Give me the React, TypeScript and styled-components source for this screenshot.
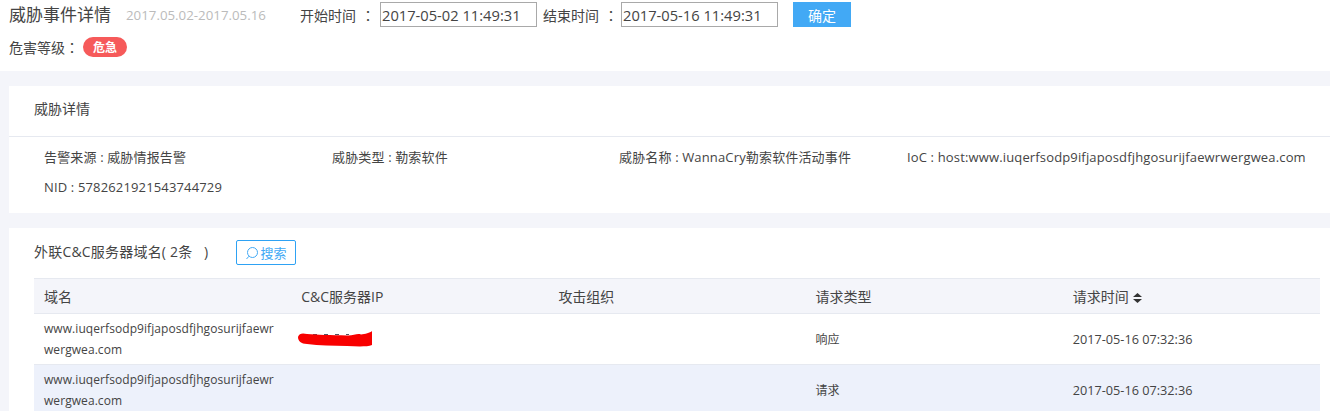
import React from "react";
import styled, { createGlobalStyle } from "styled-components";

const fontStack = `"Open Sans", "Noto Sans CJK SC", sans-serif`;
// the TC face centres the full-width colon, as the labels here have it
const labelStack = `"Open Sans", "Noto Sans CJK TC", sans-serif`;

const GlobalStyle = createGlobalStyle`
  html, body {
    margin: 0;
    padding: 0;
    background: #f4f5fa;
    font-family: ${fontStack};
    color: #444;
    overflow: hidden;
  }
`;

const Page = styled.div`
  width: 1330px;
  height: 411px;
  overflow: hidden;
`;

const Header = styled.div`
  height: 71px;
  box-sizing: border-box;
  background: #fff;
  padding: 2px 0 0 9px;
`;

const HeaderRow = styled.div`
  display: flex;
  align-items: center;
  height: 25px;
`;

const Title = styled.h1`
  margin: 0;
  font-size: 17px;
  font-weight: 400;
  line-height: 25px;
  width: 117px;
`;

const DateRange = styled.span`
  font-size: 13.3px;
  color: #bbb;
  width: 174px;
`;

const FieldLabel = styled.span<{ $width: number }>`
  font-family: ${labelStack};
  font-size: 14px;
  width: ${(p) => p.$width}px;
  flex: none;
`;

const Colon = styled.span`
  margin-left: 5px;
`;

const DateInput = styled.input<{ $gap: number }>`
  width: 157px;
  height: 25px;
  box-sizing: border-box;
  border: 1px solid #a9a9a9;
  padding: 0 1px;
  margin-right: ${(p) => p.$gap}px;
  font-family: ${fontStack};
  font-size: 14.7px;
  color: #444;
  background: #fff;
  outline: none;
`;

const ConfirmButton = styled.button`
  width: 58px;
  height: 25px;
  margin-left: 15px;
  border: 0;
  padding: 0;
  background: #42a9f5;
  color: #fff;
  font-family: ${fontStack};
  font-size: 14px;
`;

const LevelRow = styled.div`
  display: flex;
  align-items: center;
  height: 20px;
  margin-top: 10px;
`;

const LevelBadge = styled.span`
  display: inline-flex;
  align-items: center;
  justify-content: center;
  width: 44px;
  height: 20px;
  border-radius: 10px;
  background: #f65a5a;
  color: #fff;
  font-size: 12px;
  font-weight: 700;
`;

const Card = styled.section`
  margin: 15px 0 0 9px;
  background: #fff;
`;

const CardTitle = styled.div`
  height: 51px;
  box-sizing: border-box;
  padding-left: 25px;
  border-bottom: 1px solid #e6e9f0;
  font-size: 14px;
  line-height: 46px;
`;

const InfoGrid = styled.div`
  display: grid;
  grid-template-columns: 288px 287px 288px 1fr;
  grid-auto-rows: 30px;
  height: 76px;
  padding: 5px 0 0 35px;
  box-sizing: border-box;
`;

const InfoItem = styled.div`
  font-size: 13px;
  letter-spacing: 0.15px;
  line-height: 30px;
  white-space: nowrap;
`;

const SectionHead = styled.div`
  display: flex;
  align-items: center;
  height: 50px;
  padding-left: 25px;
`;

const SectionTitle = styled.span`
  font-size: 14px;
  letter-spacing: 0.2px;
  width: 202px;
  margin-top: -4px;
  white-space: pre;
`;

const SearchButton = styled.button`
  display: flex;
  align-items: center;
  justify-content: center;
  gap: 1px;
  width: 60px;
  height: 25px;
  margin-top: -1px;
  padding: 0;
  border: 1px solid #2ea2f4;
  border-radius: 2px;
  background: #fff;
  color: #42a9f5;
  font-family: ${fontStack};
  font-size: 13px;
`;

const Table = styled.table`
  width: 1286px;
  margin-left: 25px;
  border-collapse: collapse;
  table-layout: fixed;
`;

const Th = styled.th`
  height: 35px;
  box-sizing: border-box;
  padding: 0 10px;
  background: #f4f5fa;
  border-top: 1px solid #e6e9f0;
  border-bottom: 1px solid #e6e9f0;
  font-size: 14px;
  font-weight: 400;
  text-align: left;
`;

const Tr = styled.tr<{ $striped?: boolean }>`
  background: ${(p) => (p.$striped ? "#edf1fb" : "#fff")};
`;

const Td = styled.td`
  position: relative;
  height: 51px;
  box-sizing: border-box;
  padding: 0 10px;
  border-bottom: 1px solid #e6e9f0;
  font-size: 12px;
  line-height: 21px;
  word-break: break-all;
`;

const DomainCell = styled(Td)`
  padding-right: 14px;
  letter-spacing: 0.07px;
`;

const TimeCell = styled(Td)`
  font-size: 12.7px;
`;

const Scribble = styled.svg`
  position: absolute;
  left: 6px;
  top: 16px;
`;

const SortIcon = styled.svg`
  margin-left: 4px;
  vertical-align: -1px;
`;

const rows = [
  { type: "响应", redacted: true },
  { type: "请求", redacted: false },
];

export default function App() {
  return (
    <Page>
      <GlobalStyle />
      <Header>
        <HeaderRow>
          <Title>威胁事件详情</Title>
          <DateRange>2017.05.02-2017.05.16</DateRange>
          <FieldLabel $width={80}>
            开始时间<Colon>：</Colon>
          </FieldLabel>
          <DateInput $gap={6} defaultValue="2017-05-02 11:49:31" />
          <FieldLabel $width={78}>
            结束时间<Colon>：</Colon>
          </FieldLabel>
          <DateInput $gap={0} defaultValue="2017-05-16 11:49:31" />
          <ConfirmButton>确定</ConfirmButton>
        </HeaderRow>
        <LevelRow>
          <FieldLabel $width={74}>危害等级：</FieldLabel>
          <LevelBadge>危急</LevelBadge>
        </LevelRow>
      </Header>

      <Card>
        <CardTitle>威胁详情</CardTitle>
        <InfoGrid>
          <InfoItem>告警来源 : 威胁情报告警</InfoItem>
          <InfoItem>威胁类型 : 勒索软件</InfoItem>
          <InfoItem>威胁名称 : WannaCry勒索软件活动事件</InfoItem>
          <InfoItem>IoC : host:www.iuqerfsodp9ifjaposdfjhgosurijfaewrwergwea.com</InfoItem>
          <InfoItem>NID : 5782621921543744729</InfoItem>
        </InfoGrid>
      </Card>

      <Card>
        <SectionHead>
          <SectionTitle>{"外联C&C服务器域名( 2条   )"}</SectionTitle>
          <SearchButton>
            <svg width="14" height="14" viewBox="0 0 14 14" fill="none" stroke="#42a9f5" strokeWidth="1">
              <circle cx="7.5" cy="6.5" r="5" />
              <path d="M4 10.2 1.5 13" />
            </svg>
            搜索
          </SearchButton>
        </SectionHead>
        <Table>
          <thead>
            <tr>
              <Th>域名</Th>
              <Th>C&amp;C服务器IP</Th>
              <Th>攻击组织</Th>
              <Th>请求类型</Th>
              <Th>
                请求时间
                <SortIcon width="9" height="10" viewBox="0 0 9 10" fill="#333">
                  <path d="M4.500 0 9 4H0zM0 6h9L4.500 10z" />
                </SortIcon>
              </Th>
            </tr>
          </thead>
          <tbody>
            {rows.map((row) => (
              <Tr key={row.type} $striped={!row.redacted}>
                <DomainCell>www.iuqerfsodp9ifjaposdfjhgosurijfaewrwergwea.com</DomainCell>
                <Td>
                  {row.redacted && (
                    <Scribble width="76" height="18" viewBox="0 0 76 18" fill="#f80000">
                      <path stroke="#556" strokeDasharray="4 7" d="M16 4.500H52" />
                      <path d="M1 7C2 3 6 3 10 4C20 5 34 5 50 5.500C56 6 60 3 64 4.500C68 4 73 3 75 1L75 15C70 17 60 16.500 50 16C36 15.500 22 15.500 10 14C4 14 1 11 1 7Z" />
                    </Scribble>
                  )}
                </Td>
                <Td />
                <Td>{row.type}</Td>
                <TimeCell>2017-05-16 07:32:36</TimeCell>
              </Tr>
            ))}
          </tbody>
        </Table>
      </Card>
    </Page>
  );
}
